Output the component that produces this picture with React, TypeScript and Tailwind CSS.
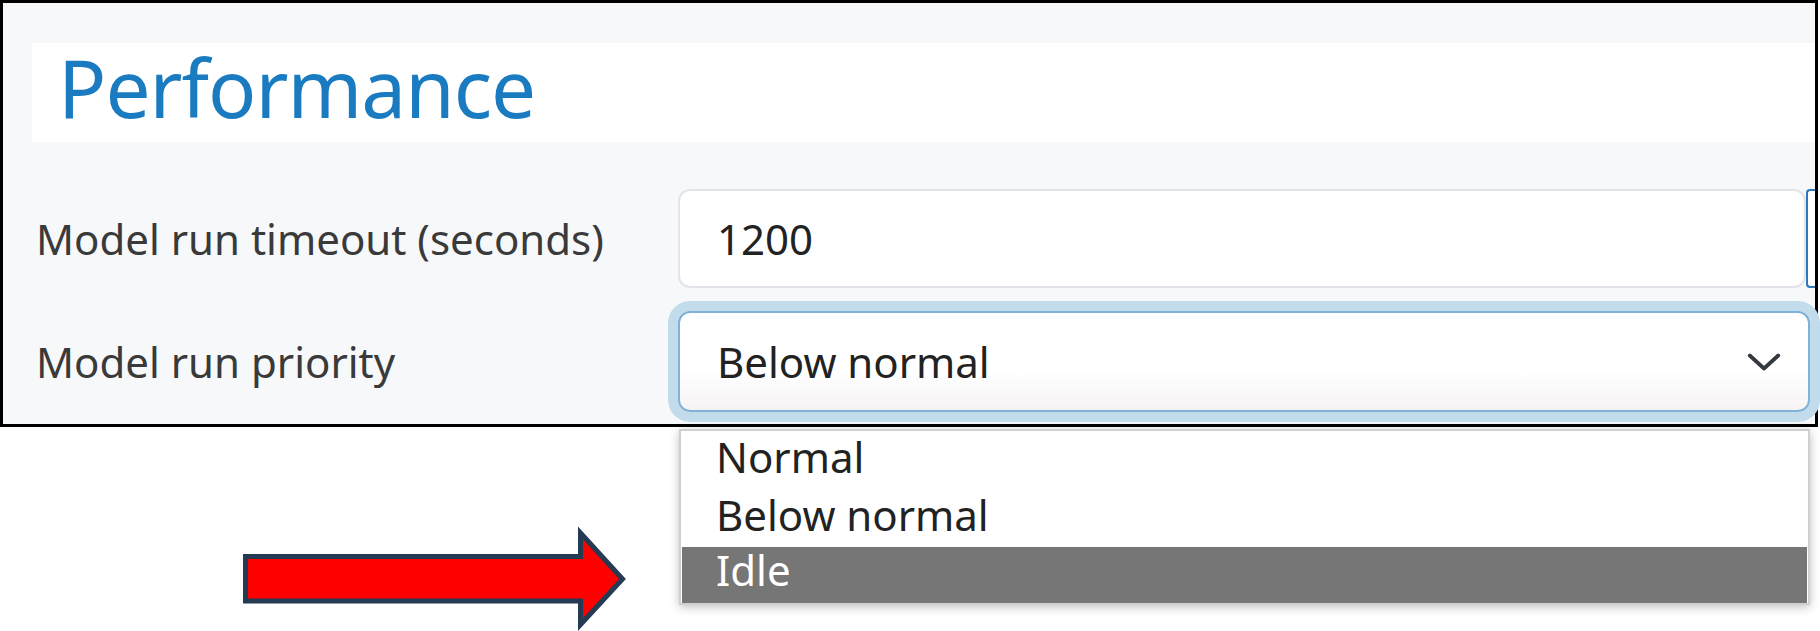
const font = { fontFamily: '"Noto Sans", "Open Sans", sans-serif' }

const options = ["Normal", "Below normal", "Idle"]

function Chevron() {
  return (
    <svg width="40" height="40" viewBox="0 0 16 16" fill="none">
      <path d="M2.3 5.4 8 10.6l5.7-5.2" stroke="#343a40" strokeWidth="1.5" strokeLinecap="round" strokeLinejoin="round" />
    </svg>
  )
}

function Arrow() {
  return (
    <svg
      className="absolute left-[236px] top-[520px]"
      width="400"
      height="114"
      viewBox="236 520 400 114"
    >
      <path
        d="M245.5 556.5 H580.5 V533 L622.5 579 L580.5 624.5 V601 H245.5 Z"
        fill="#ff0000"
        stroke="#253b53"
        strokeWidth="5"
        strokeLinejoin="miter"
      />
    </svg>
  )
}

export default function App() {
  return (
    <div className="relative w-[1820px] h-[631px] bg-white overflow-hidden" style={font}>
      <div className="w-[1818px] h-[427px] border-[3px] border-black bg-[#f7f8fa]">
        <div className="ml-[29px] mt-[40px] h-[99px] bg-white pl-[26px] pt-[4px]">
          <h1 className="text-[80px] leading-[80px] tracking-[-1px] text-[#1b7bc0]">Performance</h1>
        </div>

        <div className="mt-[47px] flex h-[99px] items-center">
          <label className="w-[675px] pl-[33px] text-[42px] text-[#3a3a3a]">Model run timeout (seconds)</label>
          <div className="flex h-full flex-1">
            <div className="flex w-[1128px] items-center rounded-[12px] border-2 border-[#e1e4e8] bg-white pl-[37px] text-[42px] text-[#222]">
              1200
            </div>
            <div className="flex-1 rounded-l-[4px] border-y-2 border-l-2 border-[#2d79bb] bg-white" />
          </div>
        </div>

        <div className="mt-[23px] flex h-[101px] items-center">
          <label className="w-[675px] pl-[33px] text-[42px] text-[#3a3a3a]">Model run priority</label>
          <div className="flex h-full flex-1">
            <div className="relative w-[1132px]">
              <div className="flex h-full items-center justify-between rounded-[12px] border-2 border-[#7fb2d9] bg-linear-to-b from-white from-60% to-[#f6f3f3] pl-[37px] pr-[24px] text-[42px] text-[#222] shadow-[0_0_0_10px_#c3dcec]">
                <span>Below normal</span>
                <Chevron />
              </div>

              <div className="absolute left-[1px] top-[calc(100%+17px)] w-[1131px] border-2 border-[#cfcfcf] bg-white px-[1px] shadow-[0_2px_9px_rgba(0,0,0,0.25)]">
                {options.map((o) =>
                  o === "Idle" ? (
                    <div key={o} className="h-[56px] bg-[#767676] pl-[34px] pt-[2px] text-[42px] leading-[42px] text-white">
                      {o}
                    </div>
                  ) : (
                    <div key={o} className="h-[58px] pl-[34px] pt-[5px] text-[42px] leading-[42px] text-[#222]">
                      {o}
                    </div>
                  )
                )}
              </div>
            </div>
            <div className="flex-1 rounded-l-[4px] border-y-2 border-l-2 border-[#8dbfe0] bg-white" />
          </div>
        </div>
      </div>

      <Arrow />
    </div>
  )
}
